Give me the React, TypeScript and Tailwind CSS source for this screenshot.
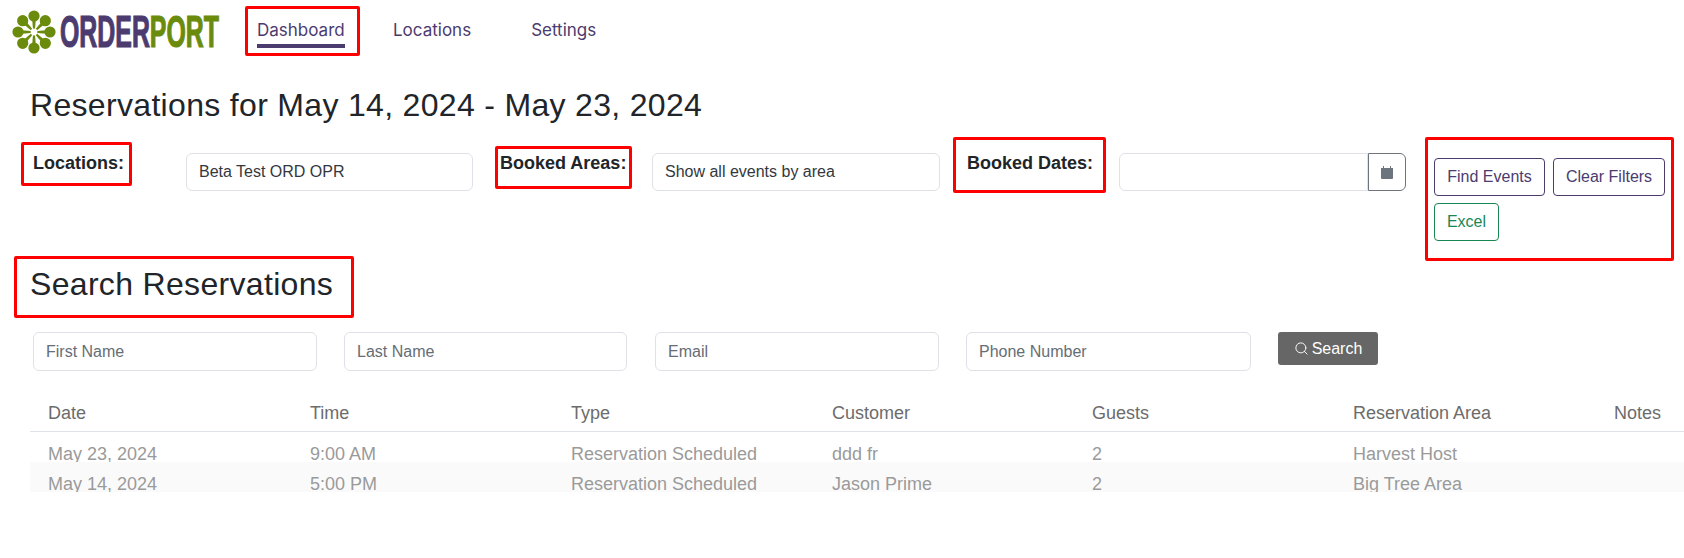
import React from "react"
import { Search } from "lucide-react"

const columns = ["Date", "Time", "Type", "Customer", "Guests", "Reservation Area", "Notes"]

const rows = [
  ["May 23, 2024", "9:00 AM", "Reservation Scheduled", "ddd fr", "2", "Harvest Host", ""],
  ["May 14, 2024", "5:00 PM", "Reservation Scheduled", "Jason Prime", "2", "Big Tree Area", ""],
]

const petals = [0, 45, 90, 135, 180, 225, 270, 315]

const Logo = () => (
  <div className="flex items-center">
    <svg width="44" height="44" viewBox="0 0 44 44" className="shrink-0">
      {petals.map((a) => (
        <g key={a} transform={`rotate(${a} 22 22)`}>
          <circle cx="22" cy="6" r="5.6" fill="#6b8b0c" />
          <path d="M20.2 9 L23.8 9 L23 20 L21 20 Z" fill="#6b8b0c" />
        </g>
      ))}
      {petals.map((a) => (
        <path key={a} d="M22 22 L21.3 12 L22.7 12 Z" fill="#fff" transform={`rotate(${a + 22.5} 22 22)`} />
      ))}
      <circle cx="22" cy="22" r="3.4" fill="#fff" />
    </svg>
    <div className="ml-[4px] w-[161px] h-[44px] overflow-visible">
      <span className="inline-block origin-left scale-x-[0.553] whitespace-nowrap font-['Liberation_Sans',sans-serif] text-[45px] leading-[44px] font-bold">
        <span className="text-[#4b3b6f] [-webkit-text-stroke:1.2px_#4b3b6f]">ORDER</span>
        <span className="text-[#6b8b0c] [-webkit-text-stroke:1.2px_#6b8b0c]">PORT</span>
      </span>
    </div>
  </div>
)

const RedBox = ({ className }: { className: string }) => (
  <div className={`absolute border-[3px] border-[#ff0000] rounded-[2px] pointer-events-none ${className}`} />
)

const Field = ({ value, placeholder, className }: { value?: string; placeholder?: string; className: string }) => (
  <div
    className={`flex items-center px-[12px] bg-white border border-[#dee2e6] rounded-[6px] text-[16px] ${
      value ? "text-[#33383d]" : "text-[#666d75]"
    } ${className}`}
  >
    {value || placeholder}
  </div>
)

export default function App() {
  return (
    <div className="relative w-[1684px] h-[558px] bg-white overflow-hidden font-['Liberation_Sans',sans-serif] text-[#212529]">
      {/* Top nav */}
      <nav className="flex items-start h-[60px] pt-[10px] pl-[12px]">
        <Logo />
        <div className="flex ml-[36px] font-['Inter',sans-serif] text-[17px] text-[#4b3b6f]">
          <div className="w-[88px] h-[38px] pt-[10px] border-b-[4px] border-[#4b3b6f] leading-[20px]">Dashboard</div>
          <div className="ml-[48px] pt-[10px] leading-[20px]">Locations</div>
          <div className="ml-[60px] pt-[10px] leading-[20px]">Settings</div>
        </div>
      </nav>

      <h2 className="ml-[30px] mt-[25px] text-[32px] leading-[40px] tracking-[0.32px]">Reservations for May 14, 2024 - May 23, 2024</h2>

      {/* Filters */}
      <div className="flex items-start mt-[28px] h-[98px]">
        <div className="ml-[33px] w-[153px] mt-[-2px] font-bold text-[18px] leading-[24px]">Locations:</div>
        <Field value="Beta Test ORD OPR" className="w-[287px] h-[38px]" />
        <div className="ml-[27px] w-[152px] mt-[-2px] font-bold text-[18px] leading-[24px]">Booked Areas:</div>
        <Field value="Show all events by area" className="w-[288px] h-[38px]" />
        <div className="ml-[27px] w-[152px] mt-[-2px] font-bold text-[18px] leading-[24px]">Booked Dates:</div>
        <div className="flex w-[287px]">
          <div className="w-[249px] h-[38px] bg-white border border-[#dee2e6] rounded-l-[6px]" />
          <div className="w-[38px] h-[38px] flex items-center justify-center border border-[#6c757d] rounded-r-[6px]">
            <svg width="12" height="13" viewBox="0 0 12 13">
              <path d="M0 2 H12 V12 A1 1 0 0 1 11 13 H1 A1 1 0 0 1 0 12 Z" fill="#6c757d" />
              <path d="M2 0 H3 V2 H2 Z M9 0 H10 V2 H9 Z" fill="#6c757d" />
            </svg>
          </div>
        </div>
        <div className="ml-[28px] mt-[5px] w-[240px] flex flex-wrap gap-x-[8px] gap-y-[7px] text-[16px]">
          <button className="w-[111px] h-[38px] border border-[#4b3b6f] rounded-[4px] text-[#4b3b6f]">Find Events</button>
          <button className="w-[112px] h-[38px] border border-[#4b3b6f] rounded-[4px] text-[#4b3b6f]">Clear Filters</button>
          <button className="w-[65px] h-[38px] border border-[#198754] rounded-[4px] text-[#198754]">Excel</button>
        </div>
      </div>

      <h2 className="ml-[30px] mt-[13px] text-[32px] leading-[40px] tracking-[0.32px]">Search Reservations</h2>

      {/* Search */}
      <div className="flex items-start ml-[33px] mt-[28px]">
        <Field placeholder="First Name" className="w-[284px] h-[39px]" />
        <Field placeholder="Last Name" className="ml-[27px] w-[283px] h-[39px]" />
        <Field placeholder="Email" className="ml-[28px] w-[284px] h-[39px]" />
        <Field placeholder="Phone Number" className="ml-[27px] w-[285px] h-[39px]" />
        <button className="ml-[27px] w-[100px] h-[33px] flex items-center justify-center gap-[3px] bg-[#666666] rounded-[3px] text-white text-[16px]">
          <Search size={15} strokeWidth={1.5} />
          Search
        </button>
      </div>

      {/* Table */}
      <div className="ml-[30px] mt-[25px] h-[122px] overflow-hidden text-[18px]">
        <div className="grid grid-cols-[262px_261px_261px_260px_261px_261px_1fr] h-[36px] items-center pl-[18px] border-b border-[#dee2e6] text-[#6c6c6c]">
          {columns.map((c) => (
            <div key={c}>{c}</div>
          ))}
        </div>
        {rows.map((r, i) => (
          <div
            key={i}
            className={`grid grid-cols-[262px_261px_261px_260px_261px_261px_1fr] h-[30px] pl-[18px] pt-[12px] leading-[20px] overflow-hidden text-[#9a9a9a] ${
              i === 1 ? "bg-[#fafafa]" : ""
            }`}
          >
            {r.map((c, j) => (
              <div key={j}>{c}</div>
            ))}
          </div>
        ))}
      </div>

      {/* Red annotation boxes */}
      <RedBox className="left-[245px] top-[6px] w-[115px] h-[50px]" />
      <RedBox className="left-[21px] top-[142px] w-[111px] h-[44px]" />
      <RedBox className="left-[495px] top-[146px] w-[137px] h-[43px]" />
      <RedBox className="left-[953px] top-[137px] w-[153px] h-[56px]" />
      <RedBox className="left-[1425px] top-[137px] w-[249px] h-[124px]" />
      <RedBox className="left-[14px] top-[256px] w-[340px] h-[62px]" />
    </div>
  )
}
